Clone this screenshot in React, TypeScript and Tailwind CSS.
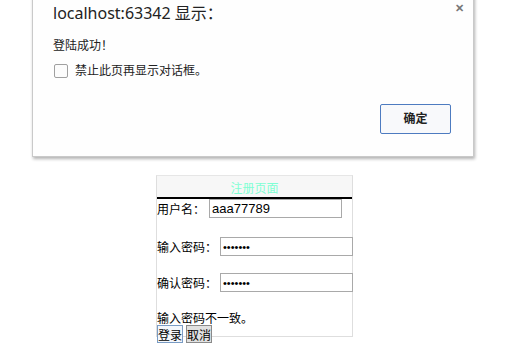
const font = "font-['Noto_Sans','Noto_Sans_CJK_SC',sans-serif]";
const cjk = "font-['Noto_Sans_CJK_SC','Noto_Sans',sans-serif]";

const AlertDialog = () => {
  return (
    <div className="absolute left-[32px] top-[-10px] w-[442px] h-[167px] bg-[#fefefe] border border-[#c9c9c9] shadow-[1px_2px_3px_rgba(0,0,0,0.3)]">
      <span className="absolute right-[9px] top-[11px] text-[11px] leading-none text-[#777] font-bold">✕</span>
      <div className="pl-[20px] pt-[11px]">
        <p className="text-[16px] leading-[22px] text-[#222]">localhost:63342 显示：</p>
        <p className="mt-[14px] text-[12px] leading-[16px] text-[#222]">登陆成功！</p>
        <div className="flex items-center gap-[7px] mt-[9px] ml-[1px]">
          <span className="w-[14px] h-[14px] rounded-[2px] border border-[#a0a0a0] bg-[#fcfcfc]" />
          <span className="text-[12px] leading-[16px] text-[#222]">禁止此页再显示对话框。</span>
        </div>
      </div>
      {/* OK */}
      <button className="absolute left-[347px] top-[113px] w-[71px] h-[30px] rounded-[2px] border border-[#4d7bc0] bg-[#f8f9fb] text-[12px] font-bold text-[#222]">
        确定
      </button>
    </div>
  );
};

const Field = ({ label, value, type, gap, mt }: { label: string; value: string; type: string; gap: string; mt: string }) => (
  <div className={`flex items-center h-[19px] text-[12px] text-black ${mt}`}>
    <span className="whitespace-nowrap shrink-0">{label}</span>
    <input
      readOnly
      type={type}
      defaultValue={value}
      className={`${gap} shrink-0 w-[133px] h-[19px] border border-[#a9a9a9] px-[2px] outline-none font-['Liberation_Sans',sans-serif] ${type === "password" ? "text-[11px]" : "text-[13px]"}`}
    />
  </div>
);

const App = () => {
  return (
    <div className={`relative w-[517px] h-[363px] bg-white overflow-hidden ${font}`}>
      {/* register card */}
      <div className={`ml-[156px] pt-[175px] ${cjk}`}>
        <div className="w-[197px] h-[162px] border border-[#dedede] border-t-[#e6e6e6]">
          <div className="h-[23px] bg-[#f7f7f7] border-b-2 border-black text-center text-[12px] leading-[23px] text-[#7fffd4]">
            注册页面
          </div>
          <Field label="用户名：" value="aaa77789" type="text" gap="ml-[4px]" mt="" />
          <Field label="输入密码：" value="1234567" type="password" gap="ml-[3px]" mt="mt-[19px]" />
          <Field label="确认密码：" value="1234567" type="password" gap="ml-[3px]" mt="mt-[17px]" />
          <p className="mt-[17px] text-[12px] leading-[17px] text-black">输入密码不一致。</p>
          <div className="flex gap-[3px] -mt-[1px]">
            <button className="h-[18px] px-0 border border-[#7a9cc4] bg-[#f4f7fb] text-[12px] leading-[15px] text-black">登录</button>
            <button className="h-[18px] px-0 border border-[#8a8a8a] bg-[#e1e1e1] text-[12px] leading-[15px] text-black">取消</button>
          </div>
        </div>
      </div>
      <AlertDialog />
    </div>
  );
};

export default App;
